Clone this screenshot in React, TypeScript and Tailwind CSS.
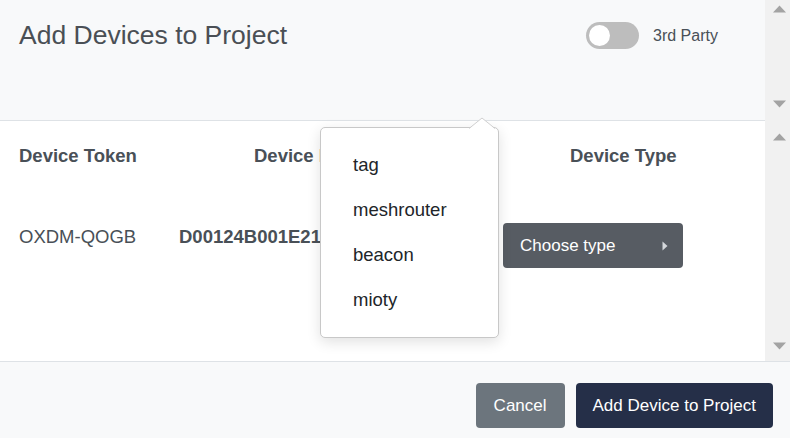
function ScrollColumn({ up, down }: { up: string; down: string }) {
  return (
    <div className="relative w-[25px] shrink-0 bg-[#f1f1f1]">
      <svg className={`absolute left-[8px] ${up}`} width="13" height="8" viewBox="0 0 13 8">
        <path d="M0 7.5 L6.5 0.5 L13 7.5 Z" fill="#a3a3a3" />
      </svg>
      <svg className={`absolute left-[8px] ${down}`} width="13" height="8" viewBox="0 0 13 8">
        <path d="M0 0.5 L6.5 7.5 L13 0.5 Z" fill="#a3a3a3" />
      </svg>
    </div>
  );
}

const types = ["tag", "meshrouter", "beacon", "mioty"];

export default function App() {
  return (
    <div className="relative w-[790px] h-[438px] overflow-hidden flex flex-col bg-white font-['Liberation_Sans',Arial,sans-serif] text-[#495057]">
      {/* header */}
      <div className="flex h-[121px] bg-[#f8f9fa]">
        <div className="flex-1 flex border-b border-[#dee2e6]">
          <h1 className="w-[586px] pl-[19px] pt-[20px] text-[26.5px] leading-[31px] text-[#4a4f55]">
            Add Devices to Project
          </h1>
          <div className="flex items-start pt-[22px] gap-[14px]">
            <div className="w-[53px] h-[27px] rounded-full bg-[#bdbdbd] flex items-center pl-[3px]">
              <div className="w-[21px] h-[21px] rounded-full bg-white" />
            </div>
            <span className="text-[16px] leading-[25px] pt-[1px]">3rd Party</span>
          </div>
        </div>
        <ScrollColumn up="top-[5px]" down="top-[100px]" />
      </div>

      {/* body */}
      <div className="flex h-[241px] border-b border-[#dee2e6]">
        <div className="flex-1 pt-[22px] text-[18.5px] leading-[25px]">
          <div className="grid grid-cols-[179px_324px_1fr] font-bold">
            <div className="pl-[19px]">Device Token</div>
            <div className="pl-[75px] whitespace-nowrap">Device EUI</div>
            <div className="pl-[67px]">Device Type</div>
          </div>
          <div className="grid grid-cols-[179px_324px_1fr] mt-[55px] items-start">
            <div className="pl-[19px] pt-[1px]">OXDM-QOGB</div>
            <div className="font-bold pt-[1px] whitespace-nowrap">D00124B001E21C85</div>
            <div>
              <button className="w-[180px] h-[45px] rounded-[4px] bg-[#575c63] text-white text-[17px] flex items-center justify-between pl-[17px] pr-[15px]">
                <span>Choose type</span>
                <svg width="6" height="10" viewBox="0 0 6 10">
                  <path d="M0.5 0.5 L5.5 5 L0.5 9.5 Z" fill="#d4d7db" />
                </svg>
              </button>
            </div>
          </div>
        </div>
        <ScrollColumn up="top-[12px]" down="top-[221px]" />
      </div>

      {/* footer */}
      <div className="flex-1 bg-[#f8f9fa] flex items-start justify-end gap-[11px] pt-[21px] pr-[17px] text-[17px]">
        <button className="h-[45px] px-[18px] rounded-[4px] bg-[#6c757d] text-white">Cancel</button>
        <button className="h-[45px] px-[17px] rounded-[4px] bg-[#252f48] text-white">Add Device to Project</button>
      </div>

      {/* type menu */}
      <div className="absolute left-[320px] top-[127px] w-[179px] h-[211px] bg-white border border-[#c8c8c8] rounded-[5px] shadow-[0_4px_14px_rgba(0,0,0,0.12)] pt-[14px] pl-[32px]">
        <svg className="absolute left-[148px] top-[-11px]" width="26" height="12" viewBox="0 0 26 12">
          <path d="M0 12 L13 1 L26 12 Z" fill="#ffffff" />
          <path d="M0 11.5 L13 1 L26 11.5" fill="none" stroke="#d0d0d0" strokeWidth="1" />
        </svg>
        <ul className="text-[18.5px] leading-[45px] text-[#212529]">
          {types.map((t) => (
            <li key={t}>{t}</li>
          ))}
        </ul>
      </div>
    </div>
  );
}
